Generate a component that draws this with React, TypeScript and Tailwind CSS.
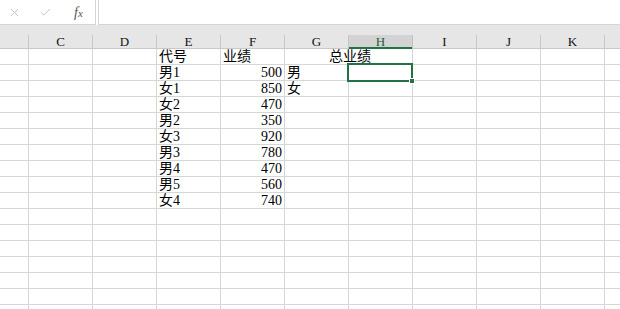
import { X, Check } from "lucide-react"

const cols = ["", "C", "D", "E", "F", "G", "H", "I", "J", "K", ""]

type Cell = { text?: string; align?: "left" | "right"; overflow?: boolean }

const data: Record<number, Record<number, Cell>> = {
    0: { 3: { text: "代号" }, 4: { text: "业绩" }, 5: { text: "总业绩", overflow: true } },
    1: { 3: { text: "男1" }, 4: { text: "500", align: "right" }, 5: { text: "男" } },
    2: { 3: { text: "女1" }, 4: { text: "850", align: "right" }, 5: { text: "女" } },
    3: { 3: { text: "女2" }, 4: { text: "470", align: "right" } },
    4: { 3: { text: "男2" }, 4: { text: "350", align: "right" } },
    5: { 3: { text: "女3" }, 4: { text: "920", align: "right" } },
    6: { 3: { text: "男3" }, 4: { text: "780", align: "right" } },
    7: { 3: { text: "男4" }, 4: { text: "470", align: "right" } },
    8: { 3: { text: "男5" }, 4: { text: "560", align: "right" } },
    9: { 3: { text: "女4" }, 4: { text: "740", align: "right" } },
}

const gridCols = "grid grid-cols-[29px_repeat(10,64px)]"

export default function App() {
    const rows = Array.from({ length: 17 }, (_, i) => i)

    return (
        <div className="w-[620px] h-[309px] overflow-hidden bg-white text-black font-['Liberation_Serif','Noto_Sans_CJK_SC',serif]">
            {/* formula bar */}
            <div className="flex h-[25px] gap-[2px] bg-white">
                <div className="flex w-[96px] items-center border-r border-b border-[#d5d5d5]">
                    <X className="ml-[8px] size-[13px] text-[#b8b8b8]" strokeWidth={1.5} />
                    <Check className="ml-[18px] size-[13px] text-[#b8b8b8]" strokeWidth={1.5} />
                    <span className="ml-[22px] text-[14px] italic text-[#555]">f<span className="text-[11px]">x</span></span>
                </div>
                <div className="flex-1 border-l border-b border-[#d5d5d5]" />
            </div>

            {/* column headers */}
            <div className="h-[10px] bg-[#e6e6e6]" />
            <div className={`${gridCols} h-[14px] bg-[#e6e6e6] border-b border-[#c8c8c8]`}>
                {cols.map((c, i) => (
                    <div
                        key={i}
                        className={
                            i === 6
                                ? "relative flex items-end justify-center border-r border-[#c0c0c0] bg-[#d3d3d3] text-[13px] leading-[13px] text-[#1e5e3a]"
                                : "flex items-end justify-center border-r border-[#c8c8c8] text-[13px] leading-[13px] text-[#111]"
                        }
                    >
                        {c}
                        {i === 6 && <div className="absolute left-0 right-0 -bottom-[1px] h-[2px] bg-[#217346]" />}
                    </div>
                ))}
            </div>

            {/* rows */}
            {rows.map((r) => (
                <div key={r} className={`${gridCols} h-[16px]`}>
                    {cols.map((_, ci) => {
                        const cell = data[r]?.[ci]
                        const hideRight = r === 0 && ci === 5
                        return (
                            <div
                                key={ci}
                                className={`relative border-b border-[#d6d6d6] ${hideRight ? "" : "border-r"} text-[14px] leading-[15px] whitespace-nowrap ${
                                    cell?.align === "right" ? "text-right pr-[2px]" : "pl-[2px]"
                                }`}
                            >
                                {cell?.overflow ? (
                                    <span className="absolute left-[44px] top-0 z-10">{cell.text}</span>
                                ) : (
                                    cell?.text
                                )}
                                {r === 1 && ci === 6 && (
                                    <>
                                        <div className="absolute -left-[2px] -top-[2px] z-20 h-[19px] w-[66px] border-2 border-[#217346]" />
                                        <div className="absolute -right-[3px] -bottom-[4px] z-30 size-[6px] border border-white bg-[#217346]" />
                                    </>
                                )}
                            </div>
                        )
                    })}
                </div>
            ))}
        </div>
    )
}
